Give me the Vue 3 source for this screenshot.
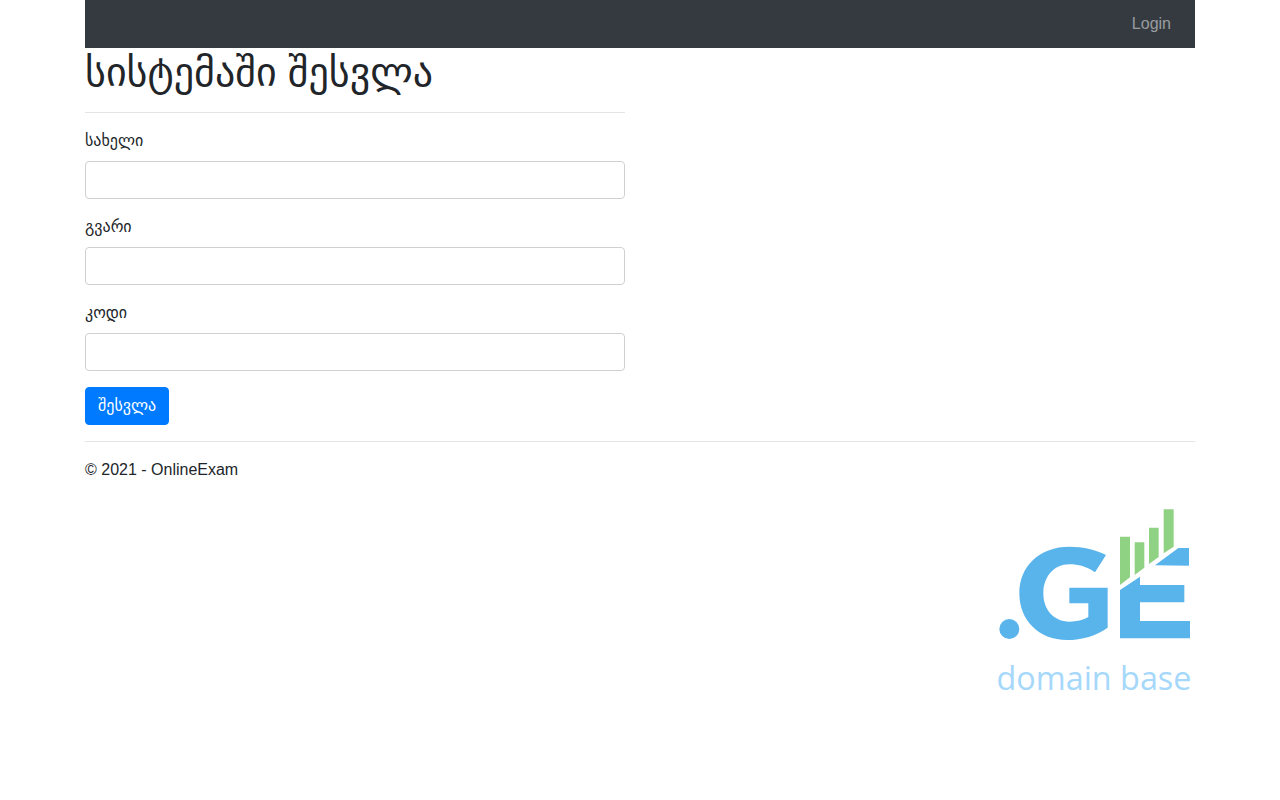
<template>
  <div class="container">
    <header class="navbar">
      <a class="nav-link" href="#">Login</a>
    </header>

    <main>
      <form class="login-form" @submit.prevent>
        <h1 class="title">სისტემაში შესვლა</h1>
        <hr />
        <div v-for="field in fields" :key="field" class="form-group">
          <label class="label">{{ field }}</label>
          <input class="input" type="text" />
        </div>
        <button class="btn" type="submit">შესვლა</button>
      </form>
      <hr />
      <footer class="footer">© 2021 - OnlineExam</footer>
    </main>

    <div class="logo-row">
      <svg class="logo" viewBox="45 15 600 600" width="200" height="200" role="img" aria-label=".GE domain base">
        <circle cx="88" cy="402" r="30" fill="#5ab4ec" />
        <path
          fill="#5ab4ec"
          d="M378 180 L345 232 C320 215 295 208 268 208 C222 208 190 245 190 295 C190 345 222 380 268 380 C290 380 310 375 325 366 L325 325 L268 325 L268 278 L383 278 L383 398 C350 422 305 435 262 435 C175 435 118 375 118 295 C118 212 180 155 268 155 C310 155 350 165 378 180 Z"
        />
        <polygon fill="#5ab4ec" points="420,285 480,245 480,270 613,270 613,322 480,322 480,378 630,378 630,430 420,430" />
        <polygon fill="#5ab4ec" points="525,211 595,159 627,159 627,212" />
        <polygon fill="#90d283" points="420,125 450,125 450,247 420,270" />
        <polygon fill="#90d283" points="464,142 493,142 493,218 464,240" />
        <polygon fill="#90d283" points="507,98 536,98 536,186 507,207" />
        <polygon fill="#90d283" points="551,43 581,43 581,155 551,175" />
        <text class="logo-text" x="342" y="585" text-anchor="middle">domain base</text>
      </svg>
    </div>
  </div>
</template>

<script setup>
const fields = ['სახელი', 'გვარი', 'კოდი'];
</script>

<style>
body {
  background: #fff;
}
</style>

<style scoped>
.container {
  width: 1110px;
  margin: 0 auto;
  font-family: "Liberation Sans", "DejaVu Sans", sans-serif;
  font-size: 16px;
  line-height: 24px;
  color: #212529;
}

.navbar {
  display: flex;
  justify-content: flex-end;
  height: 48px;
  padding: 8px 16px;
  box-sizing: border-box;
  background: #343a40;
}

.nav-link {
  padding: 0 8px;
  line-height: 32px;
  color: rgba(255, 255, 255, 0.5);
  text-decoration: none;
}

.login-form {
  width: 540px;
}

.title {
  margin: 0;
  font-size: 40px;
  font-weight: 500;
  line-height: 48px;
}

hr {
  height: 1px;
  margin: 16px 0;
  border: 0;
  background: rgba(0, 0, 0, 0.1);
}

.form-group {
  margin-bottom: 16px;
}

.label {
  display: block;
  margin-bottom: 8px;
}

.input {
  display: block;
  width: 100%;
  height: 38px;
  box-sizing: border-box;
  padding: 6px 12px;
  border: 1px solid #ced0d2;
  border-radius: 4px;
  background: #fff;
}

.btn {
  display: block;
  height: 38px;
  padding: 6px 12px;
  border: 1px solid #007bff;
  border-radius: 4px;
  background: #007bff;
  color: #fff;
  font: inherit;
}

.logo-row {
  display: flex;
  justify-content: flex-end;
  padding-top: 18px;
}

.logo-text {
  font-family: "Open Sans", sans-serif;
  font-size: 97px;
  fill: #a5d8fa;
}
</style>
